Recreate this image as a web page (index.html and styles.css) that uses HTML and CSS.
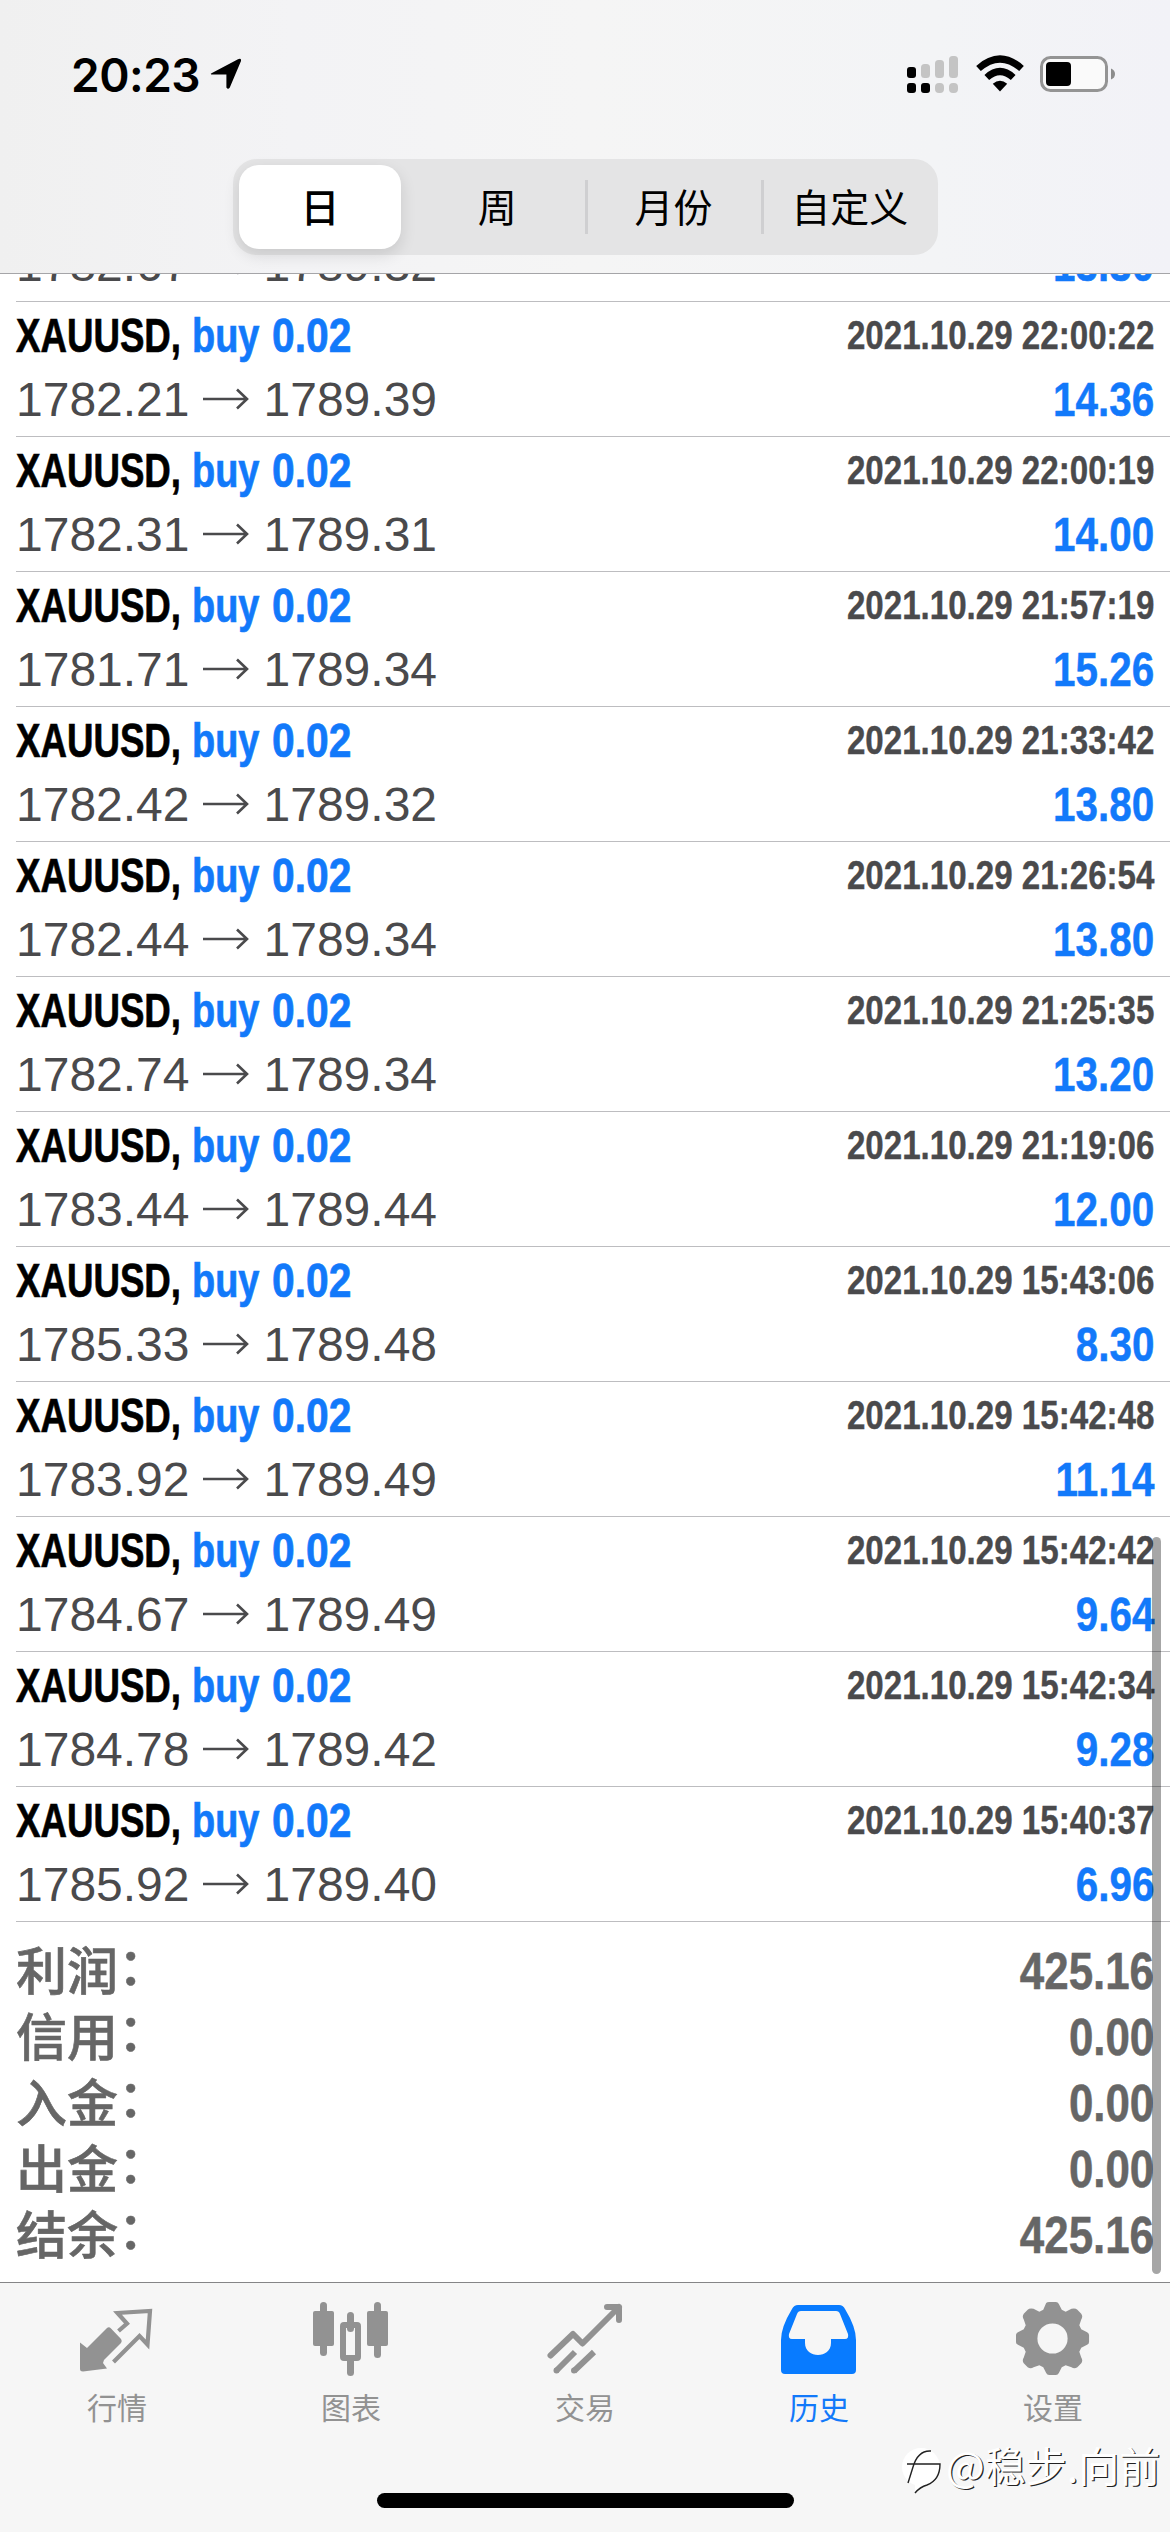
FILE: index.html
```html
<!DOCTYPE html>
<html lang="zh-CN">
<head>
<meta charset="utf-8">
<title>历史</title>
<link rel="stylesheet" href="styles.css">
</head>
<body>
<div class="screen">
  <header class="header">
    <div class="status">
      <span class="clock">20:23</span>
      <svg class="location" width="32" height="34" viewBox="0 0 32 34"><path d="M1.5 16.2 28 2.2Q31.5.8 31 4L19.8 30.5Q18 33 16.4 30.5V17.5H3Q-.6 17.5 1.5 16.2Z"/></svg>
      <svg class="signal" width="52" height="38" viewBox="0 0 52 38">
        <g fill="#c4c4c4"><rect x="14" y="8" width="9" height="14" rx="3.5"/><rect x="28" y="4" width="9" height="18" rx="3.5"/><rect x="42" y="0" width="9" height="22" rx="3.5"/><rect x="28" y="27" width="9" height="10" rx="4"/><rect x="42" y="27" width="9" height="10" rx="4"/></g>
        <rect x="0" y="11" width="9" height="11" rx="3"/><rect x="0" y="27" width="9" height="10" rx="3"/><rect x="14" y="27" width="9" height="10" rx="3"/>
      </svg>
      <svg class="wifi" width="50" height="37" viewBox="0 0 50 37"><g fill="none" stroke="#000" stroke-width="7"><path d="M3.5 13.5Q25-5.5 46.5 13.5"/><path d="M11.8 22.5Q25 10.5 38.2 22.5"/></g><path d="M17.8 28.7Q25 23 32.2 28.7L25 36.5Z"/></svg>
      <svg class="battery" width="76" height="36" viewBox="0 0 76 36"><rect x="1.5" y="1.5" width="65" height="33" rx="9" fill="#fafafa" stroke="#949494" stroke-width="3"/><rect x="6" y="6" width="25" height="24" rx="4"/><path d="M71 12.5Q75 14 75 18T71 23.5Z" fill="#8c8c8c"/></svg>
    </div>
    <nav class="segments">
      <span class="segment active">日</span><span class="segment">周</span><span class="segment ruled">月份</span><span class="segment ruled">自定义</span>
    </nav>
  </header>
  <main class="history">
    <div class="deals" id="deals"></div>
    <dl class="totals">
      <div><dt>利润<span class="colon">：</span></dt><dd>425.16</dd></div>
      <div><dt>信用<span class="colon">：</span></dt><dd>0.00</dd></div>
      <div><dt>入金<span class="colon">：</span></dt><dd>0.00</dd></div>
      <div><dt>出金<span class="colon">：</span></dt><dd>0.00</dd></div>
      <div><dt>结余<span class="colon">：</span></dt><dd>425.16</dd></div>
    </dl>
    <div class="scrollbar"></div>
  </main>
  <footer class="tabbar">
    <a class="tab"><svg width="76" height="76" viewBox="0 0 76 76"><path d="M1 42.500 8 48 28 28Q30 26.500 32 28.500L42 39Q43.500 41 42 43L25 60 24 63 28 68.500 4 71.500Q1 71.500 1 69Z" fill="#929292"/><path d="M39.500 31 48 23.500 38.500 13 71 11 68.500 44.500 60.500 36 34.500 62" fill="none" stroke="#929292" stroke-width="4.200"/></svg>行情</a>
    <a class="tab"><svg width="76" height="76" viewBox="0 0 76 76"><g fill="#929292"><rect x="0" y="11" width="21" height="35" rx="2"/><rect x="54" y="11" width="21" height="35" rx="2"/><rect x="7" y="2" width="7" height="54" rx="3.5"/><rect x="61" y="2" width="7" height="56" rx="3.5"/><rect x="34" y="12" width="7" height="20" rx="3.5"/><rect x="34" y="56" width="7" height="20" rx="3.5"/></g><rect x="30" y="25" width="15" height="33" rx="1" fill="none" stroke="#929292" stroke-width="6"/></svg>图表</a>
    <a class="tab"><svg width="76" height="76" viewBox="0 0 76 76"><g fill="none" stroke="#929292" stroke-width="6" stroke-linecap="round" stroke-linejoin="round"><path d="M3.500 55.500 26 34 35.500 43.500 72 7M60 7H72V20"/></g><path d="M9 71 28 52M27 71 47 52" fill="none" stroke="#929292" stroke-width="6"/><circle cx="9.500" cy="70.500" r="3"/><circle cx="27" cy="70.500" r="3"/></svg>交易</a>
    <a class="tab current"><svg width="76" height="76" viewBox="0 0 76 76"><path fill="#087bff" fill-rule="evenodd" d="M17 5H58Q62 5 64 9Q75 27 75 40V70Q75 74 71 74H4Q0 74 0 70V40Q0 27 11 9Q13 5 17 5ZM20 11Q17 11 16 14L8 34Q7 39 11 39H24V43C24 59 50 59 50 43V39H64Q68 39 67 34L59 14Q58 11 55 11Z"/></svg>历史</a>
    <a class="tab"><svg width="76" height="76" viewBox="0 0 76 78"><path fill="#929292" fill-rule="evenodd" d="M31 3Q32 2 34 2H41Q43 2 44 4L47 10L51 12L57 9Q61 8 63 10L67 14Q69 17 67 20L65 26L67 30L73 33Q75 34 75 36V43Q75 45 73 46L67 49L65 53L67 59Q69 62 67 65L63 69Q60 71 57 69L51 67L47 69L44 75Q43 77 41 77H34Q32 77 31 75L28 69L24 67L18 69Q15 71 12 69L8 65Q6 62 8 59L10 53L8 49L2 46Q0 45 0 43V36Q0 34 2 33L8 30L10 26L8 20Q6 17 8 14L12 10Q14 8 18 9L24 12L28 10ZM37.5 24A15.5 15.5 0 1 0 37.5 55A15.5 15.5 0 1 0 37.5 24Z"/></svg>设置</a>
    <div class="home"></div>
    <div class="watermark"><svg width="40" height="50" viewBox="0 0 40 50"><circle cx="19" cy="20" r="19" fill="#fff"/><path d="M13 45V30H36Q32 38 24 39Z" fill="#fff"/><path d="M6 36 11 20Q16 3 29 4M5 17H38Q38 33 25 38Q18 40 13 46" fill="none" stroke="#222" stroke-width="1.4"/></svg>@稳步.向前</div>
  </footer>
</div>
<script src="deals.js"></script>
</body>
</html>
```
FILE: styles.css
```css
* { box-sizing: border-box; }
body { margin: 0; background: #fff; font-family: "Liberation Sans", "Noto Sans CJK SC", sans-serif; }
.screen { display: flex; flex-direction: column; width: 1170px; height: 2532px; overflow: hidden; }
.header { flex: none; height: 274px; border-bottom: 1px solid #a5a5a8; background: linear-gradient(90deg, #f0f0f0, #f3f3f5 25%, #f5f5f5 50%, #f3f4f6 80%, #f2f2f7); z-index: 1; }
.status { display: flex; align-items: flex-start; height: 159px; padding: 55px 54px 0 71px; }
.clock { width: 139px; font: 600 46px/40px Inter, sans-serif; letter-spacing: -.5px; }
.location { margin-top: 2px; }
.signal { margin: 1px 16px 0 auto; }
.wifi { margin-right: 15px; }
.battery { margin-top: 1px; }
.segments { display: grid; grid-template-columns: repeat(4, 1fr); width: 705px; height: 96px; margin-left: 233px; border-radius: 24px; background: #e4e4e5; }
.segment { position: relative; display: flex; align-items: center; justify-content: center; padding-bottom: 5px; font: 400 39px/56px "Noto Sans CJK SC", sans-serif; }
.segment.active { margin: 6px 8px 6px 6px; border-radius: 20px; background: #fff; font-weight: 500; box-shadow: 0 6px 16px rgba(0,0,0,.12); }
.ruled::before { content: ""; position: absolute; left: -1px; top: 21px; width: 3px; height: 54px; background: #cfcfd1; }
.history { position: relative; flex: none; height: 2008px; overflow: hidden; }
.deals { margin-top: -107px; }
.deal { display: grid; grid-template: 67px 60px / auto auto; align-content: start; height: 135px; margin-left: 16px; padding-right: 16px; border-bottom: 1px solid #bdbdc0; justify-content: space-between; align-items: center; white-space: pre; color: #4a4a4c; }
.title { display: flex; font-size: 48px; font-weight: 700; color: #1279fa; }
.title span { transform-origin: left; -webkit-text-stroke: .7px; }
.symbol { width: 176px; color: #000; transform: scaleX(.764); }
.side { width: 80px; transform: scaleX(.79); }
.lot { width: 90px; transform: scaleX(.85); }
.time, .profit, .totals dd { font-weight: 700; transform-origin: right; }
.time { font-size: 40px; justify-self: end; transform: scaleX(.828); -webkit-text-stroke: .4px; }
.profit { font-size: 48px; justify-self: end; transform: scaleX(.842); color: #1279fa; -webkit-text-stroke: .5px; }
.prices { display: flex; align-items: center; font-size: 48px; }
.prices svg { margin: 0 15px 0 13px; }
.totals { margin: 0; padding: 16px 16px 0; color: #666; }
.totals div { display: flex; justify-content: space-between; align-items: center; height: 66px; }
.totals dt { padding-bottom: 6px; font: 500 51px/60px "Noto Sans CJK SC", sans-serif; -webkit-text-stroke: .6px; }
.colon { display: inline-block; transform: translateY(-5px); }
.totals dd { margin: 0; font-size: 51px; transform: scaleX(.86); -webkit-text-stroke: .5px; }
.scrollbar { position: absolute; right: 9px; top: 1263px; width: 9px; height: 737px; border-radius: 5px; background: rgba(0,0,0,.35); }
.tabbar { position: relative; flex: 1; display: grid; grid-template-columns: repeat(5, 1fr); border-top: 1px solid #858587; background: #f6f6f6; }
.tab { display: flex; flex-direction: column; align-items: center; padding-top: 17px; font: 400 30px/44px "Noto Sans CJK SC", sans-serif; color: #929292; }
.tab svg { margin-bottom: 8px; fill: #929292; }
.tab.current { color: #1279fa; }
.home { position: absolute; left: 377px; top: 210px; width: 417px; height: 15px; border-radius: 8px; background: #000; }
.watermark { position: absolute; left: 902px; top: 164px; display: flex; align-items: flex-start; gap: 4px; white-space: nowrap; font: 400 41px/34px "Noto Sans CJK SC", sans-serif; color: #fff; text-shadow: 1.2px 1.2px 0 #222; }
```
FILE: deals.js
```js
const deals = [
  ["1782.67", "1789.32", "13.30", "2021.10.29 22:00:25"],
  ["1782.21", "1789.39", "14.36", "2021.10.29 22:00:22"],
  ["1782.31", "1789.31", "14.00", "2021.10.29 22:00:19"],
  ["1781.71", "1789.34", "15.26", "2021.10.29 21:57:19"],
  ["1782.42", "1789.32", "13.80", "2021.10.29 21:33:42"],
  ["1782.44", "1789.34", "13.80", "2021.10.29 21:26:54"],
  ["1782.74", "1789.34", "13.20", "2021.10.29 21:25:35"],
  ["1783.44", "1789.44", "12.00", "2021.10.29 21:19:06"],
  ["1785.33", "1789.48", "8.30", "2021.10.29 15:43:06"],
  ["1783.92", "1789.49", "11.14", "2021.10.29 15:42:48"],
  ["1784.67", "1789.49", "9.64", "2021.10.29 15:42:42"],
  ["1784.78", "1789.42", "9.28", "2021.10.29 15:42:34"],
  ["1785.92", "1789.40", "6.96", "2021.10.29 15:40:37"]
];
const arrow = '<svg width="46" height="24" viewBox="0 0 46 24"><path d="M0 12H44M34 2.5 44 12 34 21.5" fill="none" stroke="#4a4a4c" stroke-width="2.6"/></svg>';
document.getElementById("deals").innerHTML = deals.map(([open, close, profit, time], i) => {
  // The first deal is scrolled under the header, only its price line shows.
  const title = i ? '<span class="symbol">XAUUSD,</span><span class="side">buy</span><span class="lot">0.02</span>' : "";
  return `<article class="deal"><div class="title">${title}</div><span class="time">${i ? time : ""}</span><div class="prices">${open}${arrow}${close}</div><span class="profit">${profit}</span></article>`;
}).join("");
```
